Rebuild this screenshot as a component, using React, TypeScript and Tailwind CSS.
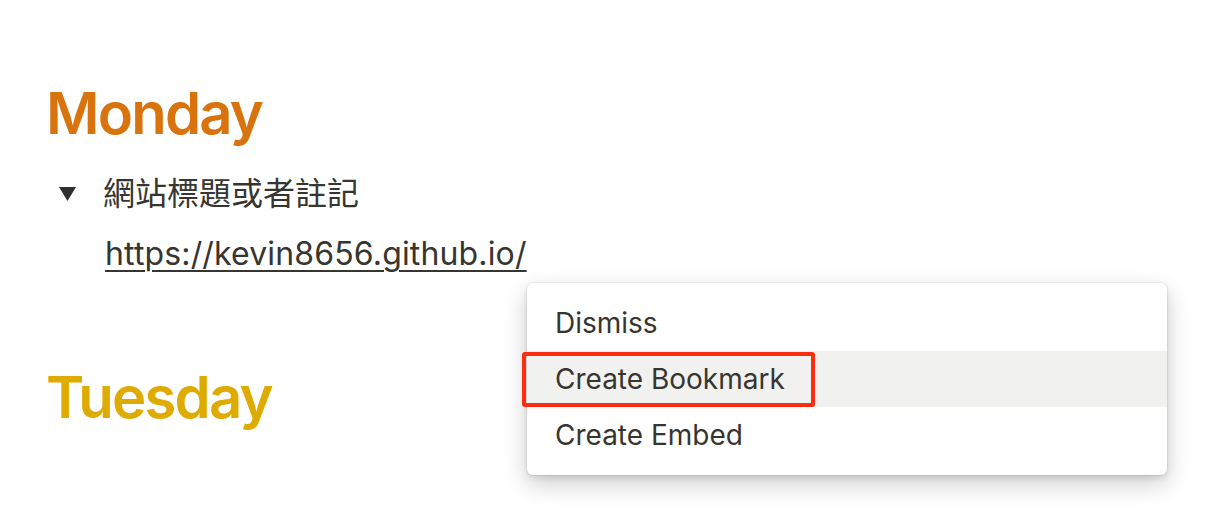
import React from "react";

export default function App() {
  const font = { fontFamily: 'Inter, "Noto Sans CJK TC", "Noto Sans", sans-serif' };
  return (
    <div className="relative w-[1219px] h-[516px] bg-white overflow-hidden text-[#37352F]" style={font}>
      <div className="pl-[46px] pt-[77px]">
        <h1 className="text-[58px] leading-[72px] font-semibold text-[#D9730D] tracking-[-1.8px]">Monday</h1>
        <div className="mt-[20px] flex items-center h-[44px]">
          <div className="w-[57px] flex items-center pl-[13px] pt-[6px]">
            <svg width="17" height="14" viewBox="0 0 17 14">
              <polygon points="0,0 17,0 8.5,14" fill="#2f2f2f" />
            </svg>
          </div>
          <span className="text-[32px] leading-[44px] text-[#37352F]" style={{ fontFamily: '"Noto Sans CJK TC", sans-serif' }}>網站標題或者註記</span>
        </div>
        <div className="pl-[59px] mt-[19px]">
          <span className="text-[32px] leading-[44px] tracking-[0.15px] underline underline-offset-[5px] decoration-[2px]">https://kevin8656.github.io/</span>
        </div>
        <h1 className="mt-[85px] text-[58px] leading-[72px] font-semibold text-[#DFAB01] tracking-[-1.8px]">Tuesday</h1>
      </div>

      <div className="absolute left-[527px] top-[283px] w-[640px] rounded-[6px] bg-white py-[12px] shadow-[0_0_0_1px_rgba(15,15,15,0.05),0_3px_6px_rgba(15,15,15,0.1),0_9px_24px_rgba(15,15,15,0.2)]">
        <div className="h-[56px] flex items-center pl-[28px] text-[28px]">Dismiss</div>
        <div className="h-[56px] flex items-center pl-[28px] text-[28px] bg-[#F1F1F0]">Create Bookmark</div>
        <div className="h-[56px] flex items-center pl-[28px] text-[28px]">Create Embed</div>
      </div>

      <div className="absolute left-[522px] top-[352px] w-[293px] h-[55px] border-[4px] border-[#FF2D0F] rounded-[3px]" />
    </div>
  );
}
